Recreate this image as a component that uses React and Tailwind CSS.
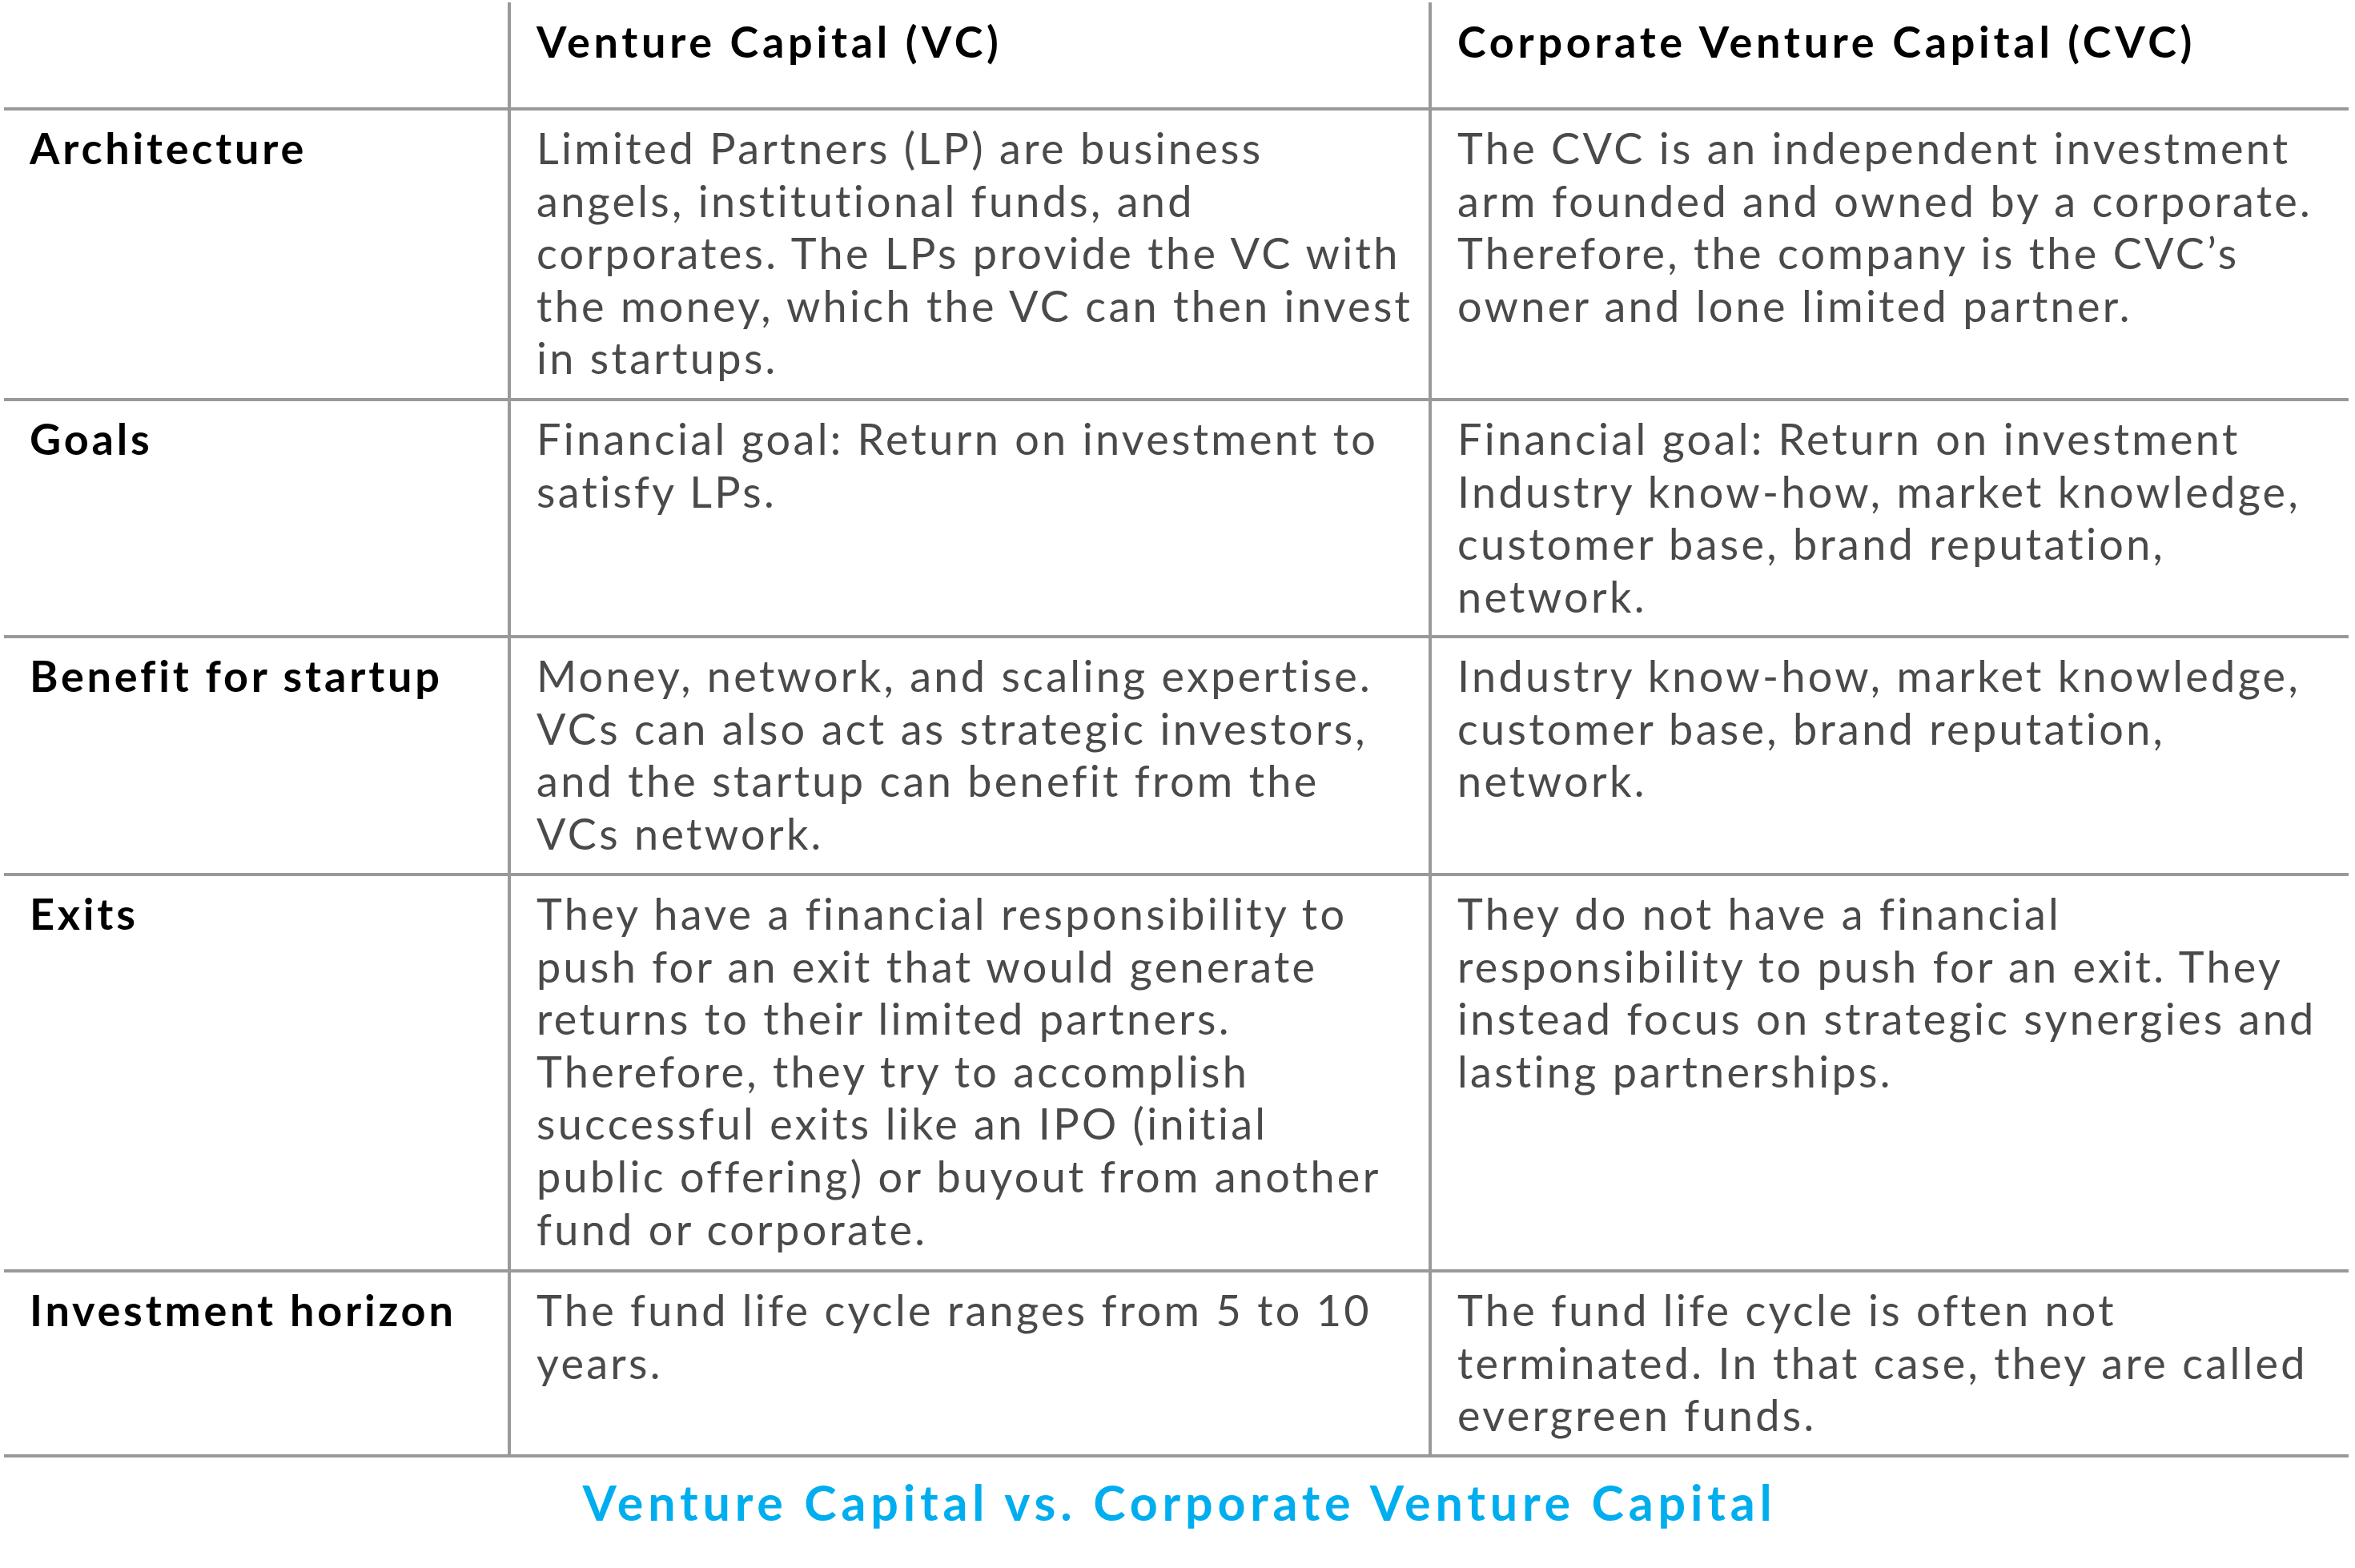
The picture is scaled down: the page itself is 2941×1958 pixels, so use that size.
export default function App() {
  const rows = [
    {
      label: "Architecture",
      h: "h-[363px]",
      vc: ["Limited Partners (LP) are business", "angels, institutional funds, and", "corporates. The LPs provide the VC with", "the money, which the VC can then invest", "in startups."],
      cvc: ["The CVC is an independent investment", "arm founded and owned by a corporate.", "Therefore, the company is the CVC\u2019s", "owner and lone limited partner."],
    },
    {
      label: "Goals",
      h: "h-[296px]",
      vc: ["Financial goal: Return on investment to", "satisfy LPs."],
      cvc: ["Financial goal: Return on investment", "Industry know-how, market knowledge,", "customer base, brand reputation,", "network."],
    },
    {
      label: "Benefit for startup",
      h: "h-[297px]",
      vc: ["Money, network, and scaling expertise.", "VCs can also act as strategic investors,", "and the startup can benefit from the", "VCs network."],
      cvc: ["Industry know-how, market knowledge,", "customer base, brand reputation,", "network."],
    },
    {
      label: "Exits",
      h: "h-[495px]",
      vc: ["They have a financial responsibility to", "push for an exit that would generate", "returns to their limited partners.", "Therefore, they try to accomplish", "successful exits like an IPO (initial", "public offering) or buyout from another", "fund or corporate."],
      cvc: ["They do not have a financial", "responsibility to push for an exit. They", "instead focus on strategic synergies and", "lasting partnerships."],
    },
    {
      label: "Investment horizon",
      h: "h-[231px]",
      vc: ["The fund life cycle ranges from 5 to 10", "years."],
      cvc: ["The fund life cycle is often not", "terminated. In that case, they are called", "evergreen funds."],
    },
  ];

  const Lines = ({ lines }) => (
    <div className="whitespace-nowrap">
      {lines.map((l, i) => (
        <div key={i}>{l}</div>
      ))}
    </div>
  );

  return (
    <div className="w-[2941px] h-[1958px] bg-white pl-[5px] pt-[3px] font-['Lato','Liberation_Sans',sans-serif]">
      <div className="w-[2928px]">
        <div className="grid grid-cols-[629px_1150px_1149px] h-[135px] border-b-4 border-[#999999] text-black font-bold text-[54px] leading-[65.6px] tracking-[4.7px] whitespace-nowrap">
          <div />
          <div className="border-l-4 border-[#999999] pl-[32px] pt-[16px]">Venture Capital (VC)</div>
          <div className="border-l-4 border-[#999999] pl-[32px] pt-[16px]">Corporate Venture Capital (CVC)</div>
        </div>
        {rows.map((r) => (
          <div
            key={r.label}
            className={`grid grid-cols-[629px_1150px_1149px] ${r.h} border-b-4 border-[#999999]`}
          >
            <div className="pl-[32px] pt-[14px] text-black font-bold text-[54px] leading-[65.6px] tracking-[3.8px] whitespace-nowrap">
              {r.label}
            </div>
            <div className="border-l-4 border-[#999999] pl-[32px] pt-[14px] text-[#4a4a4a] text-[54px] leading-[65.6px] tracking-[3.3px]">
              <Lines lines={r.vc} />
            </div>
            <div className="border-l-4 border-[#999999] pl-[32px] pt-[14px] text-[#4a4a4a] text-[54px] leading-[65.6px] tracking-[3.3px]">
              <Lines lines={r.cvc} />
            </div>
          </div>
        ))}
      </div>
      <div className="flex justify-center pt-[18px] text-[#00aeef] font-bold text-[61px] leading-[76px] tracking-[5.8px]">
        Venture Capital vs. Corporate Venture Capital
      </div>
    </div>
  );
}
